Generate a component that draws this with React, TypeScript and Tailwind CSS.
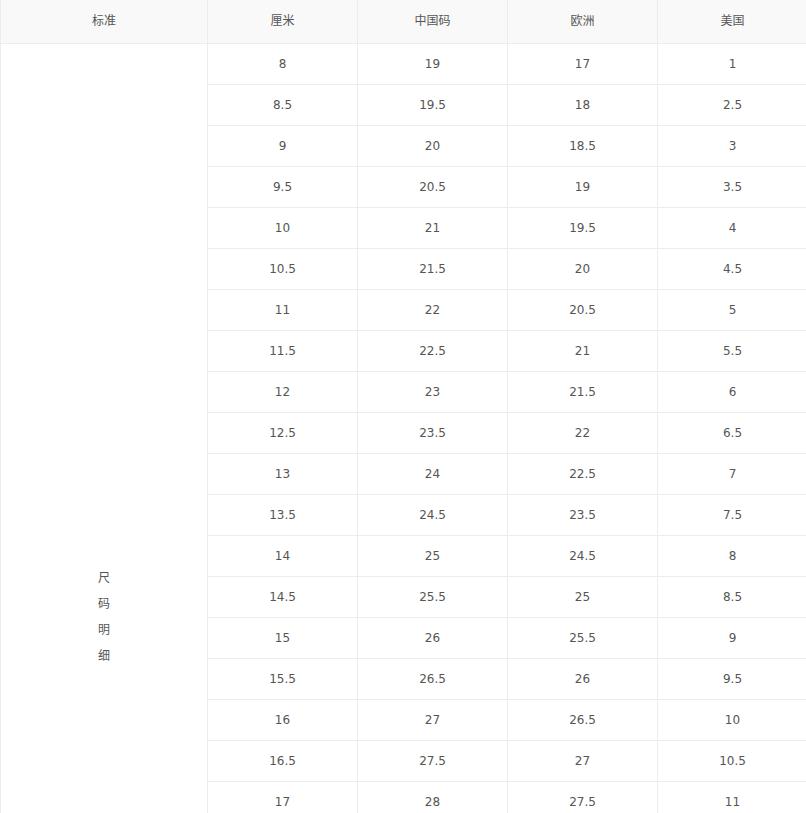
import React from "react";

const cm = [8, 8.5, 9, 9.5, 10, 10.5, 11, 11.5, 12, 12.5, 13, 13.5, 14, 14.5, 15, 15.5, 16, 16.5, 17];
const eu = ["17", "18", "18.5", "19", "19.5", "20", "20.5", "21", "21.5", "22", "22.5", "23.5", "24.5", "25", "25.5", "26", "26.5", "27", "27.5"];
const us = ["1", "2.5", "3", "3.5", "4", "4.5", "5", "5.5", "6", "6.5", "7", "7.5", "8", "8.5", "9", "9.5", "10", "10.5", "11"];

export default function App() {
  return (
    <div
      className="w-[806px] h-[813px] overflow-hidden bg-white text-[12px] text-[#555]"
      style={{ fontFamily: '"DejaVu Sans", "Noto Sans CJK SC", sans-serif' }}
    >
      <table className="w-[807px] table-fixed border-collapse">
        <colgroup>
          <col className="w-[207px]" />
          <col className="w-[150px]" />
          <col className="w-[150px]" />
          <col className="w-[150px]" />
          <col className="w-[150px]" />
        </colgroup>
        <thead>
          <tr className="bg-[#f9f9f9]">
            {["标准", "厘米", "中国码", "欧洲", "美国"].map((h) => (
              <th key={h} className="h-[43px] border border-[#ececec] border-t-0 p-0 text-center font-normal">
                {h}
              </th>
            ))}
          </tr>
        </thead>
        <tbody>
          {cm.map((c, i) => (
            <tr key={c}>
              {i === 0 && (
                <td rowSpan={cm.length} className="border border-[#ececec] border-b-0 p-0 pt-[521px] text-center align-top leading-[26px]">
                  尺<br />码<br />明<br />细
                </td>
              )}
              <td className={`${i === cm.length - 1 ? "h-[36px] align-top pt-[11px] border-b-0" : "h-[41px]"} border border-[#ececec] p-0 text-center`}>{c}</td>
              <td className={`${i === cm.length - 1 ? "h-[36px] align-top pt-[11px] border-b-0" : "h-[41px]"} border border-[#ececec] p-0 text-center`}>{c + 11}</td>
              <td className={`${i === cm.length - 1 ? "h-[36px] align-top pt-[11px] border-b-0" : "h-[41px]"} border border-[#ececec] p-0 text-center`}>{eu[i]}</td>
              <td className={`${i === cm.length - 1 ? "h-[36px] align-top pt-[11px] border-b-0" : "h-[41px]"} border border-[#ececec] p-0 text-center`}>{us[i]}</td>
            </tr>
          ))}
        </tbody>
      </table>
    </div>
  );
}
